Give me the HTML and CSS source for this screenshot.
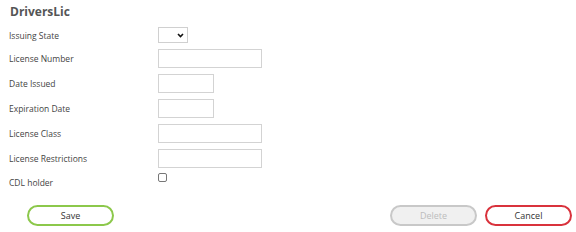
FILE: index.html
```html
<!DOCTYPE html>
<html lang="en">

<head>
  <meta charset="UTF-8" />
  <meta name="viewport" content="width=device-width, initial-scale=1.0" />
  <title>DriversLic</title>
  <link rel="stylesheet" href="styles.css">
</head>

<body>
  <div class="panel">
    <h3 class="title">DriversLic</h3>
    <form class="form">
      <div class="row row-select">
        <label>Issuing State</label>
        <div class="select-wrap">
          <select class="state">
            <option value=""></option>
          </select>
          <svg class="chevron" width="7" height="5" viewBox="0 0 7 5">
            <path d="M1 1 L3.5 3.5 L6 1" fill="none" stroke="#111" stroke-width="1.6" />
          </svg>
        </div>
      </div>
      <div class="row">
        <label>License Number</label>
        <input class="wide" type="text" />
      </div>
      <div class="row">
        <label>Date Issued</label>
        <input class="short" type="text" />
      </div>
      <div class="row">
        <label>Expiration Date</label>
        <input class="short" type="text" />
      </div>
      <div class="row">
        <label>License Class</label>
        <input class="wide" type="text" />
      </div>
      <div class="row">
        <label>License Restrictions</label>
        <input class="wide" type="text" />
      </div>
      <div class="row row-check">
        <label>CDL holder</label>
        <input class="check" type="checkbox" />
      </div>
    </form>
    <div class="actions">
      <button class="btn btn-save" type="button">Save</button>
      <div class="actions-right">
        <button class="btn btn-delete" type="button" disabled>Delete</button>
        <button class="btn btn-cancel" type="button">Cancel</button>
      </div>
    </div>
  </div>
</body>

</html>
```

FILE: styles.css
```css
* {
  margin: 0;
  padding: 0;
  box-sizing: border-box;
}

body {
  font-family: "Open Sans", "Liberation Sans", sans-serif;
  color: #444;
  background: #fff;
}

.panel {
  width: 576px;
  padding: 4px 4px 0 9px;
}

.title {
  font-size: 12px;
  font-weight: 700;
  line-height: 16px;
  color: #555;
  padding-left: 1px;
}

.form {
  margin-top: 7px;
}

.row {
  display: flex;
  align-items: center;
  height: 19px;
  margin-bottom: 6px;
}

.row label {
  width: 149px;
  font-size: 8.5px;
  color: #444;
}

.row-select {
  height: 16px;
}

.select-wrap {
  position: relative;
  width: 30px;
  height: 16px;
}

.state {
  display: block;
  appearance: none;
  width: 30px;
  height: 16px;
  border: 1px solid #d0d0d0;
  border-radius: 0;
  background: #fff;
  font-size: 8px;
}

.chevron {
  position: absolute;
  right: 4px;
  top: 6px;
  pointer-events: none;
}

.row input[type="text"] {
  height: 19px;
  border: 1px solid #d3d3d3;
  outline: none;
}

.wide {
  width: 104px;
}

.short {
  width: 56px;
}

.row-check {
  align-items: flex-start;
}

.row-check label {
  line-height: 17px;
}

.check {
  appearance: none;
  width: 9px;
  height: 9px;
  border: 1px solid #777;
  border-radius: 2px;
  background: #fff;
  margin-top: -1px;
}

.actions {
  display: flex;
  justify-content: space-between;
  margin-top: 12px;
  padding-left: 18px;
}

.actions-right {
  display: flex;
  gap: 8px;
}

.btn {
  width: 87px;
  height: 21px;
  border-radius: 11px;
  background: #fff;
  font-family: inherit;
  font-size: 9px;
  color: #333;
  border: 2px solid #ccc;
}

.btn-save {
  border-color: #8cc84b;
}

.btn-delete {
  background: #f0f0f0;
  border-color: #c8c8c8;
  color: #bcbcbc;
}

.btn-cancel {
  border-color: #d9323c;
}
```
